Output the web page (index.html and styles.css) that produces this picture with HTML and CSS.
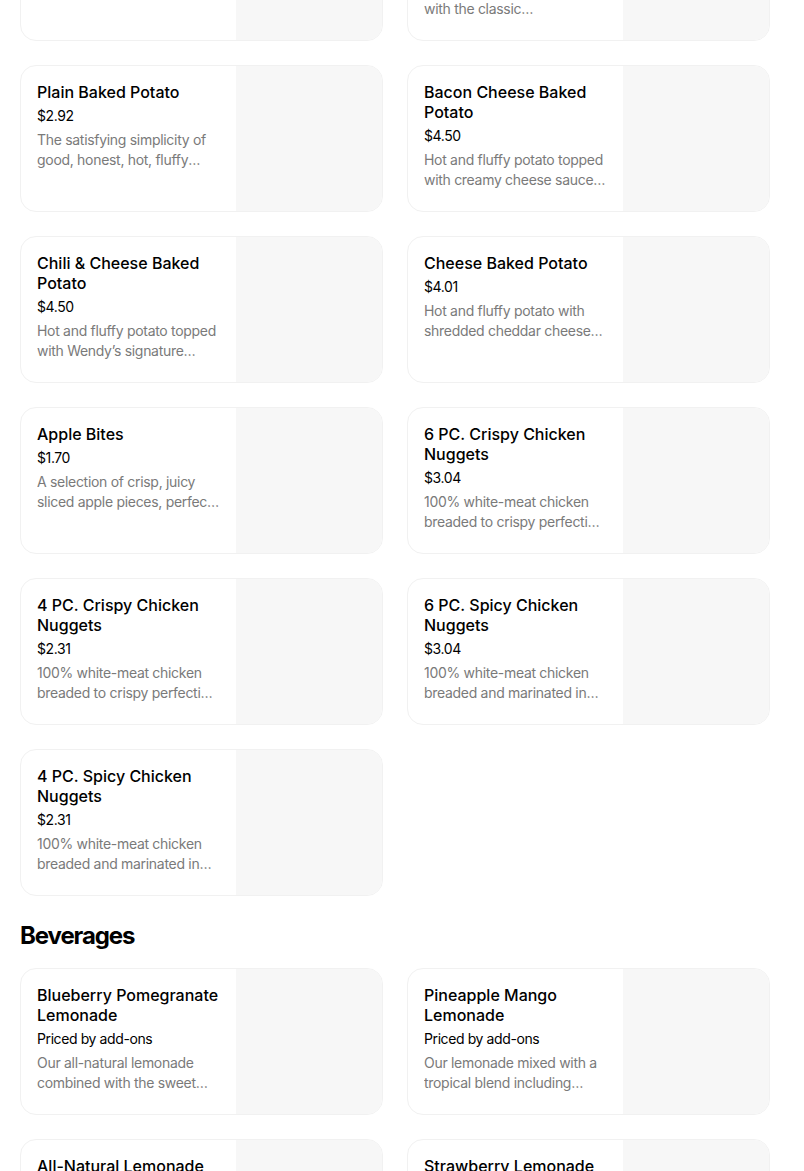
FILE: index.html
```html
<!DOCTYPE html>
<html lang="en">
<head>
<meta charset="utf-8">
<title>Menu</title>
<link rel="stylesheet" href="styles.css">
</head>
<body>
<main class="page">
  <section class="section">
    <div class="grid">
      <div class="card">
        <div class="info">
          <div class="title">Sour Cream Potato</div>
          <div class="price">$3.40</div>
          <div class="desc">Hot and fluffy potato topped with sour cream and chives, simply good.</div>
        </div>
        <div class="thumb"></div>
      </div>
      <div class="card">
        <div class="info">
          <div class="title">Broccoli Cheese Baked Potato</div>
          <div class="price">$4.01</div>
          <div class="desc">Hot and fluffy potato topped with the classic deliciousness of broccoli and cheese.</div>
        </div>
        <div class="thumb"></div>
      </div>
      <div class="card">
        <div class="info">
          <div class="title">Plain Baked Potato</div>
          <div class="price">$2.92</div>
          <div class="desc">The satisfying simplicity of good, honest, hot, fluffy baked potato.</div>
        </div>
        <div class="thumb"></div>
      </div>
      <div class="card">
        <div class="info">
          <div class="title">Bacon Cheese Baked Potato</div>
          <div class="price">$4.50</div>
          <div class="desc">Hot and fluffy potato topped with creamy cheese sauce, and crispy bacon.</div>
        </div>
        <div class="thumb"></div>
      </div>
      <div class="card">
        <div class="info">
          <div class="title">Chili &amp; Cheese Baked Potato</div>
          <div class="price">$4.50</div>
          <div class="desc">Hot and fluffy potato topped with Wendy’s signature homestyle chili and shredded cheddar.</div>
        </div>
        <div class="thumb"></div>
      </div>
      <div class="card">
        <div class="info">
          <div class="title">Cheese Baked Potato</div>
          <div class="price">$4.01</div>
          <div class="desc">Hot and fluffy potato with shredded cheddar cheese and warm cheese sauce.</div>
        </div>
        <div class="thumb"></div>
      </div>
      <div class="card">
        <div class="info">
          <div class="title">Apple Bites</div>
          <div class="price">$1.70</div>
          <div class="desc">A selection of crisp, juicy sliced apple pieces, perfect for snacking.</div>
        </div>
        <div class="thumb"></div>
      </div>
      <div class="card">
        <div class="info">
          <div class="title">6 PC. Crispy Chicken Nuggets</div>
          <div class="price">$3.04</div>
          <div class="desc">100% white-meat chicken breaded to crispy perfection and served hot.</div>
        </div>
        <div class="thumb"></div>
      </div>
      <div class="card">
        <div class="info">
          <div class="title">4 PC. Crispy Chicken Nuggets</div>
          <div class="price">$2.31</div>
          <div class="desc">100% white-meat chicken breaded to crispy perfection and served hot.</div>
        </div>
        <div class="thumb"></div>
      </div>
      <div class="card">
        <div class="info">
          <div class="title">6 PC. Spicy Chicken Nuggets</div>
          <div class="price">$3.04</div>
          <div class="desc">100% white-meat chicken breaded and marinated in flavorful spices.</div>
        </div>
        <div class="thumb"></div>
      </div>
      <div class="card">
        <div class="info">
          <div class="title">4 PC. Spicy Chicken Nuggets</div>
          <div class="price">$2.31</div>
          <div class="desc">100% white-meat chicken breaded and marinated in flavorful spices.</div>
        </div>
        <div class="thumb"></div>
      </div>
    </div>
  </section>

  <section class="section">
    <h2 class="section-title">Beverages</h2>
    <div class="grid">
      <div class="card">
        <div class="info">
          <div class="title">Blueberry Pomegranate Lemonade</div>
          <div class="price">Priced by add-ons</div>
          <div class="desc">Our all-natural lemonade combined with the sweet taste of blueberry and pomegranate.</div>
        </div>
        <div class="thumb"></div>
      </div>
      <div class="card">
        <div class="info">
          <div class="title">Pineapple Mango Lemonade</div>
          <div class="price">Priced by add-ons</div>
          <div class="desc">Our lemonade mixed with a tropical blend including pineapple and mango.</div>
        </div>
        <div class="thumb"></div>
      </div>
      <div class="card">
        <div class="info">
          <div class="title">All-Natural Lemonade</div>
          <div class="price">Priced by add-ons</div>
          <div class="desc">Made with real lemon juice and natural sugar for a refreshing taste.</div>
        </div>
        <div class="thumb"></div>
      </div>
      <div class="card">
        <div class="info">
          <div class="title">Strawberry Lemonade</div>
          <div class="price">Priced by add-ons</div>
          <div class="desc">Our all-natural lemonade with real strawberries for a sweet twist.</div>
        </div>
        <div class="thumb"></div>
      </div>
    </div>
  </section>
</main>
</body>
</html>
```
FILE: styles.css
```css
* { box-sizing: border-box; }
html, body { margin: 0; padding: 0; background: #fff; }
body {
  font-family: Inter, "Noto Sans", "Liberation Sans", sans-serif;
  color: #000;
  overflow: hidden;
}
.page {
  width: 750px;
  margin-left: 20px;
  margin-top: -106px;
}
.section-title {
  margin: 24px 0 16px;
  font-size: 24px;
  line-height: 32px;
  font-weight: 700;
  letter-spacing: -1.1px;
}
.grid {
  display: grid;
  grid-template-columns: 363px 363px;
  column-gap: 24px;
  row-gap: 24px;
}
.card {
  display: flex;
  height: 147px;
  border: 1px solid #f1f1f1;
  border-radius: 16px;
  overflow: hidden;
  background: #fff;
}
.info {
  flex: 1;
  min-width: 0;
  padding: 16px;
}
.thumb {
  width: 146px;
  flex: none;
  background: #f7f7f7;
}
.title {
  font-size: 16px;
  line-height: 20px;
  font-weight: 500;
  letter-spacing: 0;
}
.price {
  margin-top: 4px;
  font-size: 14px;
  line-height: 20px;
  letter-spacing: -0.4px;
}
.desc {
  margin-top: 4px;
  font-size: 14px;
  line-height: 20px;
  color: #7a7a7a;
  letter-spacing: -0.3px;
  display: -webkit-box;
  -webkit-line-clamp: 2;
  -webkit-box-orient: vertical;
  overflow: hidden;
}
```
